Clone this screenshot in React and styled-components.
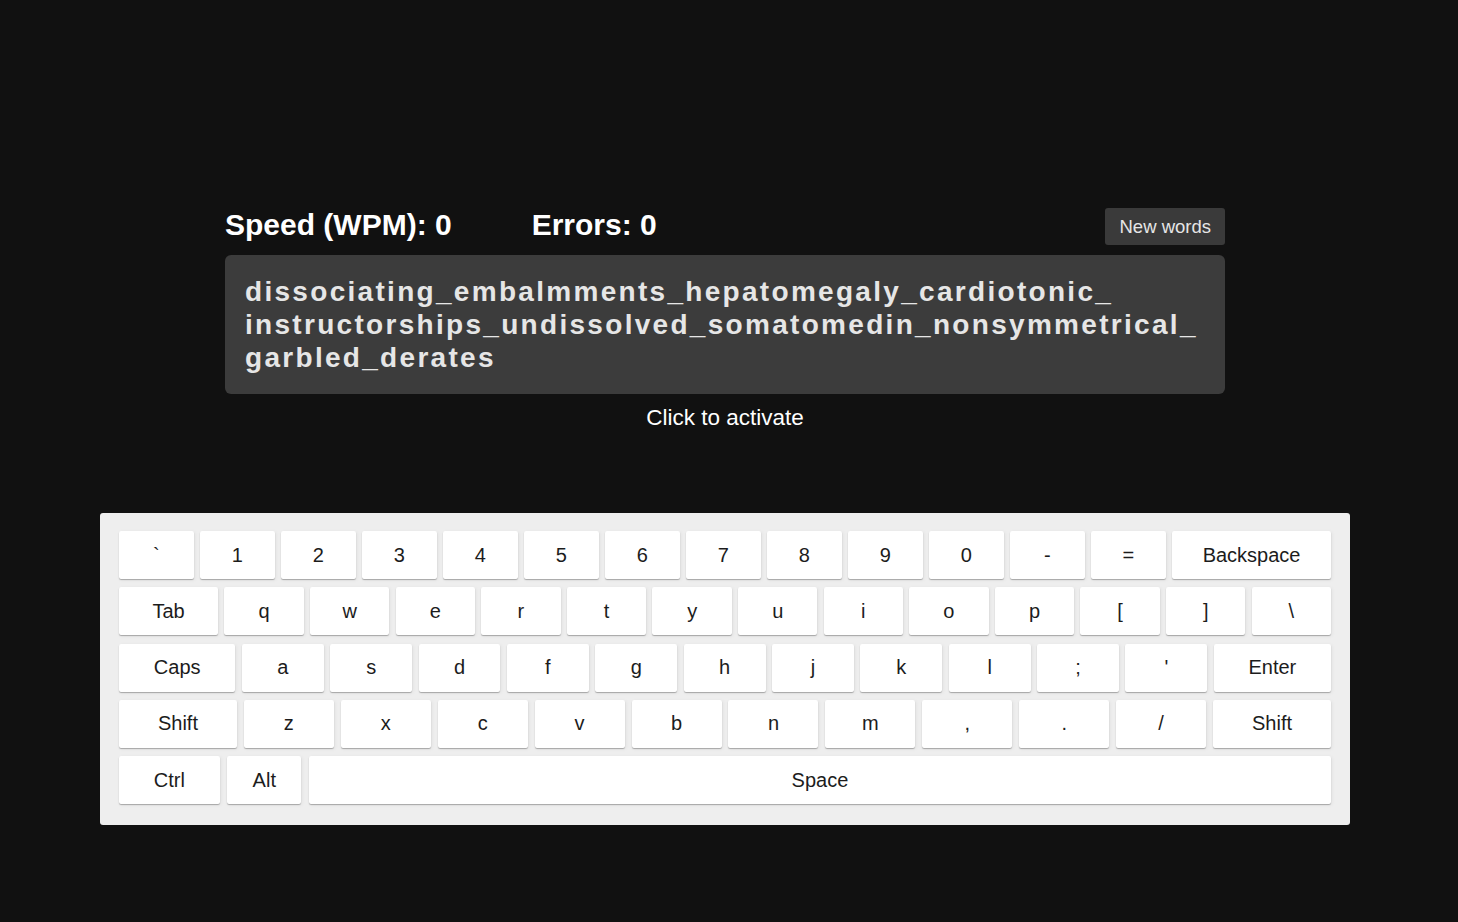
import styled, { createGlobalStyle } from "styled-components";

const words = [
    "dissociating",
    "embalmments",
    "hepatomegaly",
    "cardiotonic",
    "instructorships",
    "undissolved",
    "somatomedin",
    "nonsymmetrical",
    "garbled",
    "derates",
];

const rows = [
    { gap: 6.5, keys: [..."`1234567890-=".split("").map((k) => ({ label: k })), { label: "Backspace", grow: 2.13 }] },
    { gap: 6.2, keys: [{ label: "Tab", grow: 1.25 }, ..."qwertyuiop[]\\".split("").map((k) => ({ label: k }))] },
    {
        gap: 6.4,
        keys: [
            { label: "Caps", grow: 1.42 },
            ..."asdfghjkl;'".split("").map((k) => ({ label: k })),
            { label: "Enter", grow: 1.43 },
        ],
    },
    {
        gap: 6.9,
        keys: [
            { label: "Shift", grow: 1.31 },
            ..."zxcvbnm,./".split("").map((k) => ({ label: k })),
            { label: "Shift", grow: 1.31 },
        ],
    },
    {
        gap: 7.5,
        keys: [
            { label: "Ctrl", grow: 1.36 },
            { label: "Alt" },
            { label: "Space", grow: 13.8 },
        ],
    },
];

export default function App() {
    return (
        <>
            <GlobalStyle />
            <Page>
                <Trainer>
                    <Header>
                        <Stats>
                            <Stat>Speed (WPM): 0</Stat>
                            <Stat>Errors: 0</Stat>
                        </Stats>
                        <NewWords>New words</NewWords>
                    </Header>
                    <TextBox>
                        {words.map((w, i) => (
                            <Word key={i}>{w + (i < words.length - 1 ? "_" : "")}</Word>
                        ))}
                    </TextBox>
                    <Hint>Click to activate</Hint>
                </Trainer>
                <Keyboard>
                    {rows.map((row, i) => (
                        <Row key={i} $gap={row.gap}>
                            {row.keys.map((k, j) => (
                                <Key key={j} $grow={k.grow || 1}>{k.label}</Key>
                            ))}
                        </Row>
                    ))}
                </Keyboard>
            </Page>
        </>
    );
}

const GlobalStyle = createGlobalStyle`
    html, body {
        margin: 0;
        background: #111111;
        font-family: "Liberation Sans", Arial, sans-serif;
    }
`;

const Page = styled.div`
    width: 1450px;
    min-height: 922px;
    padding-top: 208px;
    box-sizing: border-box;
    display: flex;
    flex-direction: column;
    align-items: center;
`;

const Trainer = styled.div`
    width: 1000px;
    display: flex;
    flex-direction: column;
`;

const Header = styled.div`
    display: flex;
    justify-content: space-between;
    align-items: center;
    height: 37px;
`;

const Stats = styled.div`
    display: flex;
    gap: 80px;
    margin-top: -3px;
`;

const Stat = styled.span`
    color: #ffffff;
    font-size: 30px;
    font-weight: bold;
`;

const NewWords = styled.button`
    height: 37px;
    padding: 0 14px 0 15px;
    border: none;
    border-radius: 3px;
    background: #3a3a3a;
    color: #e6e6e6;
    font-family: inherit;
    font-size: 18.5px;
    cursor: pointer;
`;

const TextBox = styled.div`
    margin-top: 10px;
    padding: 20px;
    background: #3c3c3c;
    border-radius: 6px;
    color: #e6e6e6;
    font-size: 28px;
    font-weight: bold;
    letter-spacing: 2.3px;
    line-height: 33px;
`;

const Word = styled.span`
    display: inline-block;
`;

const Hint = styled.div`
    margin-top: 11px;
    text-align: center;
    color: #ffffff;
    font-size: 22.5px;
    line-height: 26px;
`;

const Keyboard = styled.div`
    margin-top: 82px;
    width: 1250px;
    box-sizing: border-box;
    padding: 18px 19px 21px;
    background: #eeeeee;
    border-radius: 3px;
    display: flex;
    flex-direction: column;
    gap: 8.25px;
`;

const Row = styled.div`
    display: flex;
    gap: ${(p) => p.$gap}px;
`;

const Key = styled.div`
    flex: ${(p) => p.$grow} 1 0;
    height: 48px;
    display: flex;
    justify-content: center;
    align-items: center;
    background: #ffffff;
    border-radius: 2px;
    box-shadow: 0 1px 1px rgba(0, 0, 0, 0.28), 1px 1px 4px rgba(0, 0, 0, 0.06);
    color: #1c1c1c;
    font-size: 20px;
`;
